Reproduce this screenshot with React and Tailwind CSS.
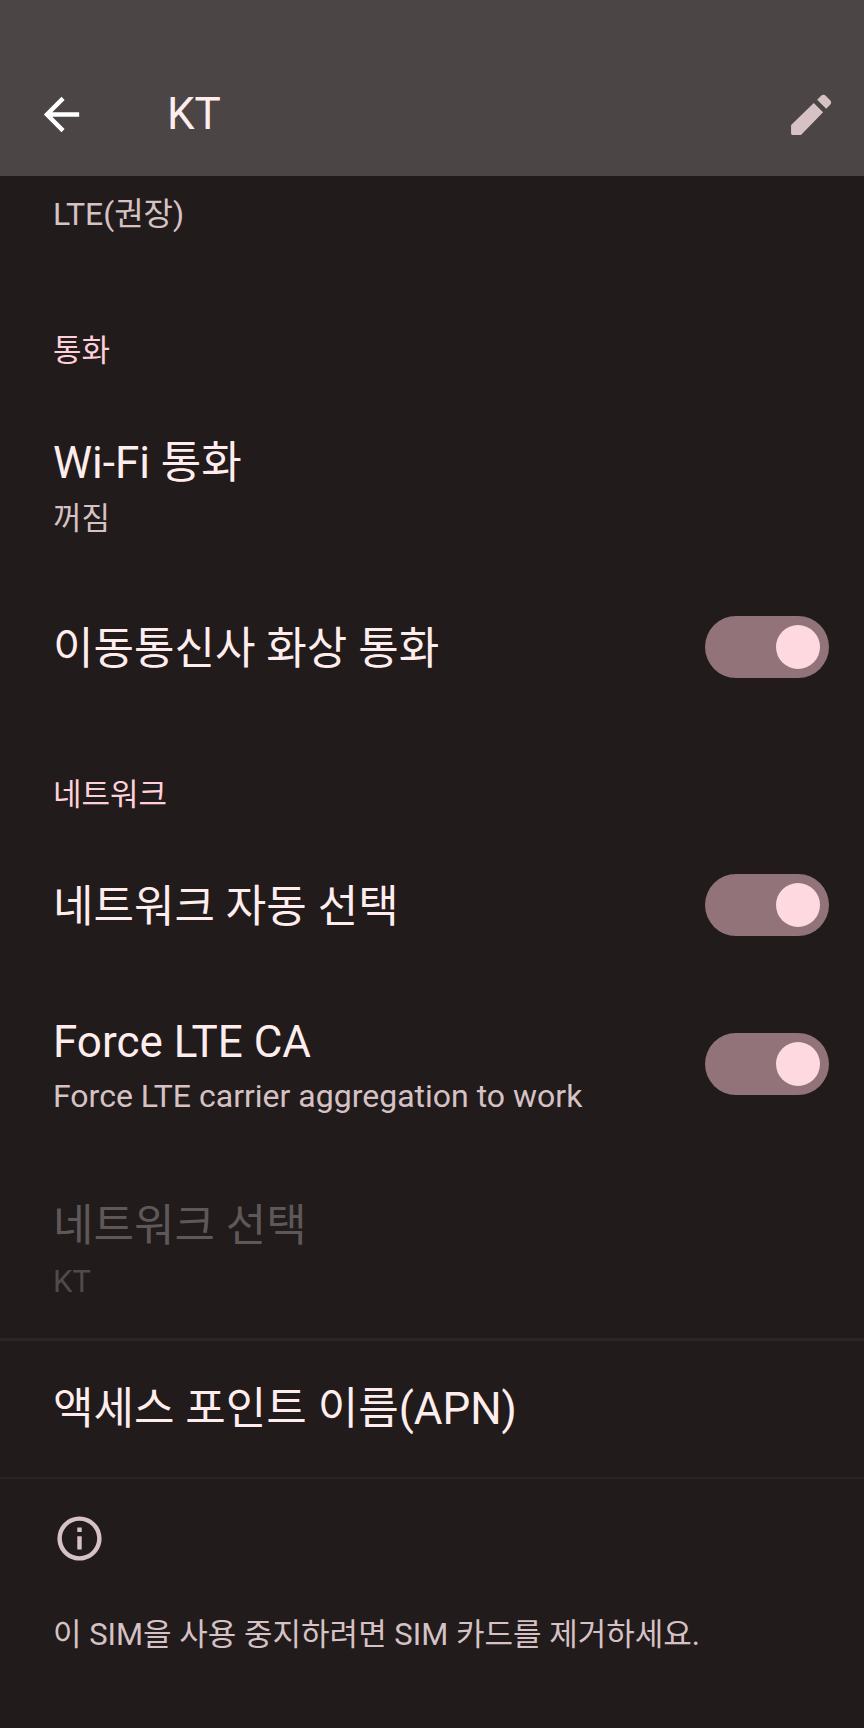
import { useState } from 'react'

function ArrowBackIcon() {
  return (
    <svg viewBox="0 0 24 24" className="size-[53px]" fill="currentColor" aria-hidden="true">
      <path d="M20 11H7.83l5.59-5.59L12 4l-8 8 8 8 1.41-1.41L7.83 13H20v-2z" />
    </svg>
  )
}

function EditIcon() {
  return (
    <svg viewBox="0 0 24 24" className="size-[53px]" fill="currentColor" aria-hidden="true">
      <path d="M3.2 17.1v3.4c0 .45.35.8.8.8h3.3c.25 0 .45-.1.6-.25L17.7 11l-4.2-4.2L3.45 16.5c-.15.15-.25.35-.25.6z" />
      <path d="M20.9 7.6c.6-.6.6-1.5 0-2.1l-2-2c-.6-.6-1.5-.6-2.1 0l-1.8 1.8 4.1 4.1 1.8-1.8z" />
    </svg>
  )
}

function InfoIcon() {
  return (
    <svg viewBox="0 0 24 24" className="size-[53px] text-[#d6c2c5]" fill="currentColor" aria-hidden="true">
      <path d="M11 7h2v2h-2V7zm0 4h2v6h-2v-6zm1-9C6.48 2 2 6.48 2 12s4.48 10 10 10 10-4.48 10-10S17.52 2 12 2zm0 18c-4.41 0-8-3.59-8-8s3.59-8 8-8 8 3.59 8 8-3.59 8-8 8z" />
    </svg>
  )
}

function SectionTitle({ children }) {
  return (
    <h2 className="px-[53px] pt-[59px] pb-[21px] text-[31px] leading-[40px] text-[#ffd0da]">{children}</h2>
  )
}

function Row({ title, sub, disabled, pad = 'py-[38px]' }) {
  return (
    <button type="button" disabled={disabled}
      className={`group block w-full px-[53px] text-left ${pad}`}>
      <span className="block text-[44px] leading-[60px] text-[#ffedee] group-disabled:text-[#5e5858]">{title}</span>
      {sub && (
        <span className="mt-1.5 block text-[31px] leading-[40px] text-[#d6c2c5] group-disabled:text-[#514a4a]">{sub}</span>
      )}
    </button>
  )
}

function SwitchRow({ title, sub }) {
  const [on, setOn] = useState(true)
  return (
    <label className={`flex items-center justify-between pr-[35px] pl-[53px] ${sub ? 'pt-[38px] pb-[40px]' : 'py-[37px]'}`}>
      <span className={sub ? '' : 'pt-1'}>
        <span className="block text-[44px] leading-[60px] text-[#ffedee]">{title}</span>
        {sub && <span className="mt-1 block text-[32px] leading-[40px] text-[#d6c2c5]">{sub}</span>}
      </span>
      <input type="checkbox" role="switch" checked={on} onChange={e => setOn(e.target.checked)}
        className="-my-1 flex h-[62px] w-[124px] shrink-0 appearance-none items-center rounded-full bg-[#5a4d50] px-[9px] before:size-[44px] before:rounded-full before:bg-[#d6c2c5] checked:justify-end checked:bg-[#92737a] checked:before:bg-[#ffd9e0]" />
    </label>
  )
}

export default function App() {
  return (
    <div className="min-h-screen bg-[#211b1b] font-['Roboto','Noto_Sans_CJK_KR',sans-serif]">
      <header className="flex h-[176px] items-center bg-[#4b4545] pt-[52px] pr-[27px] pl-[35px]">
        <button type="button" aria-label="뒤로" className="text-white">
          <ArrowBackIcon />
        </button>
        <h1 className="ml-[79px] flex-1 text-[44px] leading-[60px] text-[#ffedee]">KT</h1>
        <button type="button" aria-label="수정" className="text-[#d6c2c5]">
          <EditIcon />
        </button>
      </header>

      <main>
        <p className="px-[53px] pt-[18px] pb-[38px] text-[32px] leading-[40px] text-[#d6c2c5]">LTE(권장)</p>

        <SectionTitle>통화</SectionTitle>
        <Row title="Wi-Fi 통화" sub="꺼짐" pad="pt-[41px] pb-[39px]" />
        <SwitchRow title="이동통신사 화상 통화" />

        <SectionTitle>네트워크</SectionTitle>
        <SwitchRow title="네트워크 자동 선택" />
        <SwitchRow title="Force LTE CA" sub="Force LTE carrier aggregation to work" />
        <Row title="네트워크 선택" sub="KT" disabled pad="pt-[40px] pb-[36px]" />

        <div className="border-t-3 border-b-2 border-[#2b2626]">
          <Row title="액세스 포인트 이름(APN)" />
        </div>

        <div className="px-[53px] pt-[33px] pb-10">
          <InfoIcon />
          <p className="mt-[50px] text-[31px] leading-[40px] text-[#d6c2c5]">
            이 SIM을 사용 중지하려면 SIM 카드를 제거하세요.
          </p>
        </div>
      </main>
    </div>
  )
}
